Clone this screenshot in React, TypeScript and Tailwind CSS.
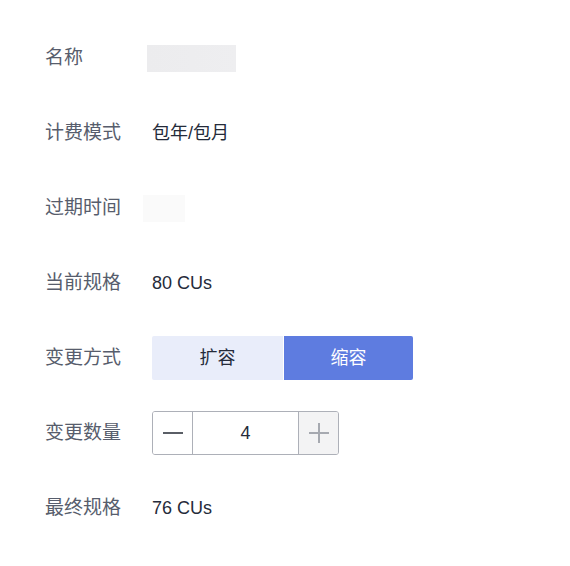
import { useState } from 'react';

const font = { fontFamily: '"Liberation Sans", "Noto Sans CJK SC", sans-serif' };

function Row({ label, children }: { label: string; children?: React.ReactNode }) {
  return (
    <div className="flex h-[44px] items-center">
      <div className="w-[107px] shrink-0 text-[19px] text-[#575d6c]">{label}</div>
      <div className="flex items-center text-[18px] text-[#252b3a]">{children}</div>
    </div>
  );
}

export default function App() {
  const [mode, setMode] = useState<'up' | 'down'>('down');
  const [count, setCount] = useState(4);

  return (
    <div style={font} className="min-h-[566px] w-[570px] bg-white pl-[45px] pt-[36px]">
      <div className="flex flex-col gap-[31px]">
        <Row label="名称">
          <div className="-ml-[5px] h-[27px] w-[89px] bg-gradient-to-r from-[#ececee] to-[#eeeef0]" />
        </Row>
        <Row label="计费模式">包年/包月</Row>
        <Row label="过期时间">
          <div className="-ml-[9px] h-[27px] w-[42px] bg-[#fafafa]" />
        </Row>
        <Row label="当前规格">80 CUs</Row>
        <Row label="变更方式">
          <div className="flex gap-px">
            <button
              onClick={() => setMode('up')}
              className={`h-[44px] w-[131px] rounded-l-[2px] text-[18px] ${
                mode === 'up' ? 'bg-[#5e7ce0] text-white' : 'bg-[#e9edfa] text-[#252b3a]'
              }`}
            >
              扩容
            </button>
            <button
              onClick={() => setMode('down')}
              className={`h-[44px] w-[129px] rounded-r-[2px] text-[18px] ${
                mode === 'down' ? 'bg-[#5e7ce0] text-white' : 'bg-[#e9edfa] text-[#252b3a]'
              }`}
            >
              缩容
            </button>
          </div>
        </Row>
        <Row label="变更数量">
          <div className="flex h-[44px] w-[187px] overflow-hidden rounded-[3px] border border-[#adb0b8]">
            <button
              onClick={() => setCount((c) => Math.max(0, c - 1))}
              className="flex w-[40px] items-center justify-center border-r border-[#adb0b8] bg-white"
            >
              <span className="block h-[2px] w-[20px] bg-[#5a5e66]" />
            </button>
            <div className="flex flex-1 items-center justify-center text-[18px] text-[#252b3a]">{count}</div>
            <button className="relative flex w-[40px] items-center justify-center border-l border-[#adb0b8] bg-[#f3f3f4]">
              <span className="absolute h-[2px] w-[20px] bg-[#a6a9b0]" />
              <span className="absolute h-[20px] w-[2px] bg-[#a6a9b0]" />
            </button>
          </div>
        </Row>
        <Row label="最终规格">76 CUs</Row>
      </div>
    </div>
  );
}
